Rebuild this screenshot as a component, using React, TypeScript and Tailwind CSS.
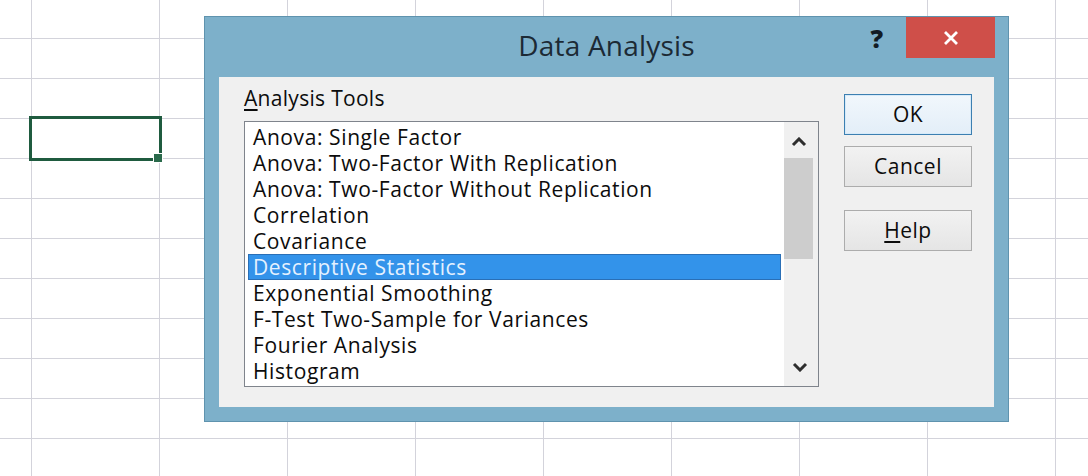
const tools = [
  "Anova: Single Factor",
  "Anova: Two-Factor With Replication",
  "Anova: Two-Factor Without Replication",
  "Correlation",
  "Covariance",
  "Descriptive Statistics",
  "Exponential Smoothing",
  "F-Test Two-Sample for Variances",
  "Fourier Analysis",
  "Histogram",
];

function Chevron({ down }: { down?: boolean }) {
  return (
    <svg width="16" height="10" viewBox="0 0 16 10" className="text-[#2e2e2e]">
      <path
        d={down ? "M2 2 L8 8 L14 2" : "M2 8 L8 2 L14 8"}
        fill="none"
        stroke="currentColor"
        strokeWidth="3"
      />
    </svg>
  );
}

function SheetGrid() {
  const cells = Array.from({ length: 120 });
  return (
    <div className="-ml-[96px] -mt-px grid grid-cols-[repeat(10,128px)] grid-rows-[repeat(12,40px)]">
      {cells.map((_, i) => (
        <div key={i} className="border-r border-b border-[#d3d3db]" />
      ))}
    </div>
  );
}

function ListBox() {
  return (
    <div className="flex h-[266px] border border-[#7f848c] bg-white">
      <div className="flex-1 px-[3px] pt-[2px] tracking-[0.6px]">
        {tools.map((t, i) => {
          const sel = i === 5;
          return (
            <div
              key={t}
              className={
                sel
                  ? "h-[26px] border border-[#2a6fb6] bg-[#3393ea] pl-[4px] leading-[24px] text-[#e4f1ff]"
                  : "h-[26px] border border-transparent pl-[4px] leading-[24px] text-[#0c0c0c]"
              }
            >
              {t}
            </div>
          );
        })}
      </div>
      <div className="flex w-[34px] flex-col bg-[#f0f0f0]">
        <div className="flex h-[36px] items-center justify-center pr-[4px] pt-[4px]">
          <Chevron />
        </div>
        <div className="h-[101px] w-[29px] bg-[#cdcdcd]" />
        <div className="flex-1" />
        <div className="flex h-[36px] items-center justify-center pr-[3px] pb-[2px]">
          <Chevron down />
        </div>
      </div>
    </div>
  );
}

export default function App() {
  return (
    <div
      className="relative h-[476px] w-[1088px] overflow-hidden bg-white text-[21px]"
      style={{ fontFamily: '"Open Sans", "Noto Sans", sans-serif' }}
    >
      <SheetGrid />

      {/* active cell */}
      <div className="absolute left-[29px] top-[116px] h-[45px] w-[133px] border-[3px] border-[#1f5b3f]" />
      <div className="absolute left-[153px] top-[153px] h-[10px] w-[10px] border border-white bg-[#2a6a4b]" />

      {/* dialog window */}
      <div className="absolute left-[204px] top-[16px] flex h-[406px] w-[805px] flex-col border border-[#5f93ae] bg-[#7db0ca]">
        <div className="grid h-[60px] grid-cols-[1fr_auto_1fr]">
          <div />
          <div className="self-center pb-[4px] text-[28px] tracking-[0.2px] text-[#1c2a35]">Data Analysis</div>
          <div className="flex items-start justify-end">
            <span className="mr-[23px] mt-[9px] text-[25px] font-extrabold leading-[24px] text-[#121c24]">?</span>
            <button className="mr-[13px] flex h-[41px] w-[89px] items-center justify-center bg-[#cf4f49]">
              <svg width="16" height="16" viewBox="0 0 16 16">
                <path d="M2 2 L14 14 M14 2 L2 14" stroke="white" strokeWidth="2.8" />
              </svg>
            </button>
          </div>
        </div>

        <div className="mx-[14px] mb-[14px] flex flex-1 gap-[25px] bg-[#f0f0f0] pl-[25px] pt-[8px] text-[#0c0c0c]">
          <div className="w-[575px]">
            <div className="mb-[10px] leading-[26px] tracking-[0.3px]">
              <span className="underline underline-offset-[3px]">A</span>nalysis Tools
            </div>
            <ListBox />
          </div>
          <div className="flex w-[128px] flex-col pt-[9px] tracking-[0.5px]">
            <button className="h-[41px] border border-[#3c7fb1] bg-gradient-to-b from-[#f1f7fc] to-[#e3eef8] shadow-[inset_0_0_0_1px_#d6eaf9]">
              OK
            </button>
            <button className="mt-[11px] h-[41px] border border-[#acacac] bg-gradient-to-b from-[#f2f2f2] to-[#e5e5e5]">
              Cancel
            </button>
            <button className="mt-[23px] h-[41px] border border-[#acacac] bg-gradient-to-b from-[#f2f2f2] to-[#e5e5e5]">
              <span className="underline underline-offset-[3px]">H</span>elp
            </button>
          </div>
        </div>
      </div>
    </div>
  );
}
